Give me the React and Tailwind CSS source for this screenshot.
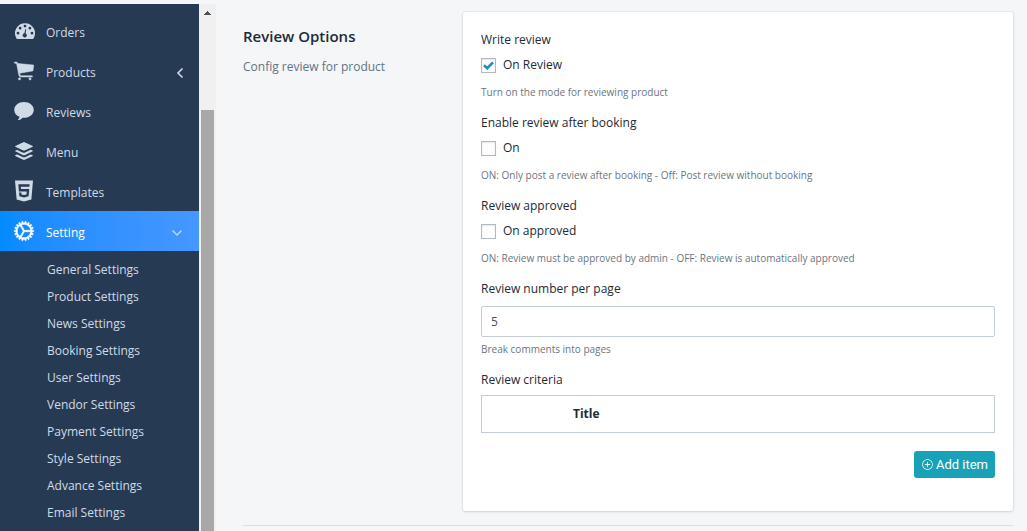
import { useState } from "react";
import {
  IoIosCart,
  IoIosText,
  IoLogoBuffer,
  IoLogoHtml5,
  IoIosCog,
  IoIosAddCircleOutline,
} from "react-icons/io";

function Dashboard({ className }) {
  return (
    <svg className={className} viewBox="0 0 24 24" fill="currentColor" fillRule="evenodd">
      <path d="M13 4.200a10 10 0 0 0-8.500 15.200c.3.500.6.700 1.100.7h14.800c.5 0 .8-.2 1.100-.7A10 10 0 0 0 13 4.200ZM6 12.800a1.400 1.400 0 1 1 0 2.800 1.400 1.400 0 0 1 0-2.800Zm2.100-5a1.400 1.400 0 1 1 0 2.800 1.400 1.400 0 0 1 0-2.800ZM13 5.700a1.400 1.400 0 1 1 0 2.800 1.400 1.400 0 0 1 0-2.800Zm4.900 2.100a1.400 1.400 0 1 1 0 2.800 1.400 1.400 0 0 1 0-2.800Zm2.100 5a1.400 1.400 0 1 1 0 2.800 1.400 1.400 0 0 1 0-2.800Zm-5.800-2.500-.5 4.200a2.100 2.100 0 1 1-1.300-.2l1-4.200Z" />
    </svg>
  );
}

function Cog({ className }) {
  return <IoIosCog className={className} stroke="currentColor" strokeWidth="14" />;
}

function Cart({ className }) {
  return <IoIosCart className={className} stroke="currentColor" strokeWidth="10" />;
}

const menu = [
  { label: "Orders", Icon: Dashboard },
  { label: "Products", Icon: Cart, arrow: "left" },
  { label: "Reviews", Icon: IoIosText },
  { label: "Menu", Icon: IoLogoBuffer },
  { label: "Templates", Icon: IoLogoHtml5 },
  { label: "Setting", Icon: Cog, arrow: "down", active: true },
];

const settings = [
  "General Settings",
  "Product Settings",
  "News Settings",
  "Booking Settings",
  "User Settings",
  "Vendor Settings",
  "Payment Settings",
  "Style Settings",
  "Advance Settings",
  "Email Settings",
];

function Arrow({ direction }) {
  return direction === "left" ? (
    <svg className="mr-[15px] h-3 w-2" viewBox="0 0 8 12" fill="none" stroke="currentColor" strokeWidth="1.600">
      <path d="M6.500 1.500 2 6l4.500 4.500" />
    </svg>
  ) : (
    <svg className="mr-4 h-2 w-3" viewBox="0 0 12 8" fill="none" stroke="#b9d5f5" strokeWidth="1.500">
      <path d="M1.500 1.500 6 6l4.500-4.500" />
    </svg>
  );
}

function Sidebar() {
  return (
    <nav className="min-w-0 flex-1 bg-[#273a53] pt-[7px] text-[12px] text-[#d0dbe8]">
      <ul>
        {menu.map(({ label, Icon, arrow, active }) => (
          <li key={label}>
            <a
              href="#"
              className={
                active
                  ? "flex h-10 items-center bg-linear-to-r from-[#028aff] to-[#4797ff] pl-3 pt-[3px] text-white"
                  : "flex h-10 items-center pl-3 pt-[3px]"
              }
            >
              <Icon className="mb-1 mr-[10px] size-6 shrink-0" />
              <span className="flex-1">{label}</span>
              {arrow && <Arrow direction={arrow} />}
            </a>
          </li>
        ))}
      </ul>
      <ul className="pt-[5px]">
        {settings.map((label) => (
          <li key={label}>
            <a href="#" className="block pl-[47px] leading-[27px]">
              {label}
            </a>
          </li>
        ))}
      </ul>
    </nav>
  );
}

function Scrollbar() {
  return (
    <div aria-hidden="true" className="flex w-[17px] shrink-0 flex-col items-center bg-[#f0f0f0]">
      <svg className="mt-[7px] h-1 w-[7px]" viewBox="0 0 7 4" fill="#505050">
        <path d="M3 0h1v1h1v1h1v1h1v1H0V3h1V2h1V1h1z" />
      </svg>
      <div className="mt-[95px] w-[13px] flex-1 bg-[#a8a8a8]" />
    </div>
  );
}

function CheckOption({ title, label, help, initial = false }) {
  const [checked, setChecked] = useState(initial);
  return (
    <fieldset className="mb-[13px]">
      <legend className="text-[12px] font-medium leading-5">{title}</legend>
      <label className="mt-[5px] flex h-5 items-center gap-[7px] text-[12px] font-medium">
        <span className="grid size-[15px] place-items-center">
          <input
            type="checkbox"
            checked={checked}
            onChange={(e) => setChecked(e.target.checked)}
            className="col-start-1 row-start-1 size-[15px] appearance-none border border-[#b4b9be] bg-white shadow-[inset_0_1px_2px_rgba(0,0,0,0.1)]"
          />
          {checked && (
            <svg className="pointer-events-none col-start-1 row-start-1 h-[9px] w-[11px]" viewBox="0 0 11 9" fill="none" stroke="#1e8cbe" strokeWidth="2.600">
              <path d="M1 4.300 4.200 7.200 10 1.300" />
            </svg>
          )}
        </span>
        {label}
      </label>
      <p className="mt-[9px] text-[10px] leading-4 text-[#6c757d]">{help}</p>
    </fieldset>
  );
}

export default function App() {
  return (
    <div className="flex h-screen overflow-hidden bg-[#f4f6f8] font-['Open_Sans','Noto_Sans',sans-serif] text-[#212b36]">
      <div className="mt-1 flex w-54 shrink-0 overflow-hidden">
        <Sidebar />
        <Scrollbar />
      </div>
      <main className="min-w-0 flex-1 pl-[27px] pr-[14px] pt-3">
        <section className="flex border-b border-[#dcdfe3] pb-[14px]">
          <div className="w-[220px] shrink-0 pt-3">
            <h3 className="text-[15px] font-semibold leading-6">Review Options</h3>
            <p className="mt-[9px] text-[12px] leading-5 text-[#637381]">Config review for product</p>
          </div>
          <div className="min-w-0 flex-1 rounded-[3px] bg-white px-[18px] pb-[33px] pt-[18px] shadow-[0_0_0_1px_rgba(63,63,68,0.05),0_1px_3px_0_rgba(63,63,68,0.15)]">
            <CheckOption title="Write review" label="On Review" help="Turn on the mode for reviewing product" initial />
            <CheckOption
              title="Enable review after booking"
              label="On"
              help="ON: Only post a review after booking - Off: Post review without booking"
            />
            <CheckOption
              title="Review approved"
              label="On approved"
              help="ON: Review must be approved by admin - OFF: Review is automatically approved"
            />
            <label htmlFor="per-page" className="block text-[12px] font-medium leading-5">
              Review number per page
            </label>
            <input
              id="per-page"
              type="text"
              defaultValue="5"
              className="mt-[7px] block h-[31px] w-full rounded-[2px] border border-[#c4cdd5] px-[9px] text-[12px] text-[#495057]"
            />
            <p className="mb-[13px] mt-1 text-[10px] leading-4 text-[#6c757d]">Break comments into pages</p>
            <h4 id="criteria" className="text-[12px] font-medium leading-5">
              Review criteria
            </h4>
            <table aria-labelledby="criteria" className="mt-[5px] w-full border border-[#c4cdd5]">
              <thead>
                <tr>
                  <th scope="col" className="h-[37px] pl-[91px] text-left text-[12px] font-bold">
                    Title
                  </th>
                </tr>
              </thead>
            </table>
            <div className="mt-[18px] flex justify-end">
              <button
                type="button"
                className="flex h-[27px] items-center gap-[2px] rounded-[3px] bg-[#17a2b8] px-[7px] font-['Roboto',sans-serif] text-[13px] text-white"
              >
                <IoIosAddCircleOutline className="size-[13px]" />
                Add item
              </button>
            </div>
          </div>
        </section>
      </main>
    </div>
  );
}
